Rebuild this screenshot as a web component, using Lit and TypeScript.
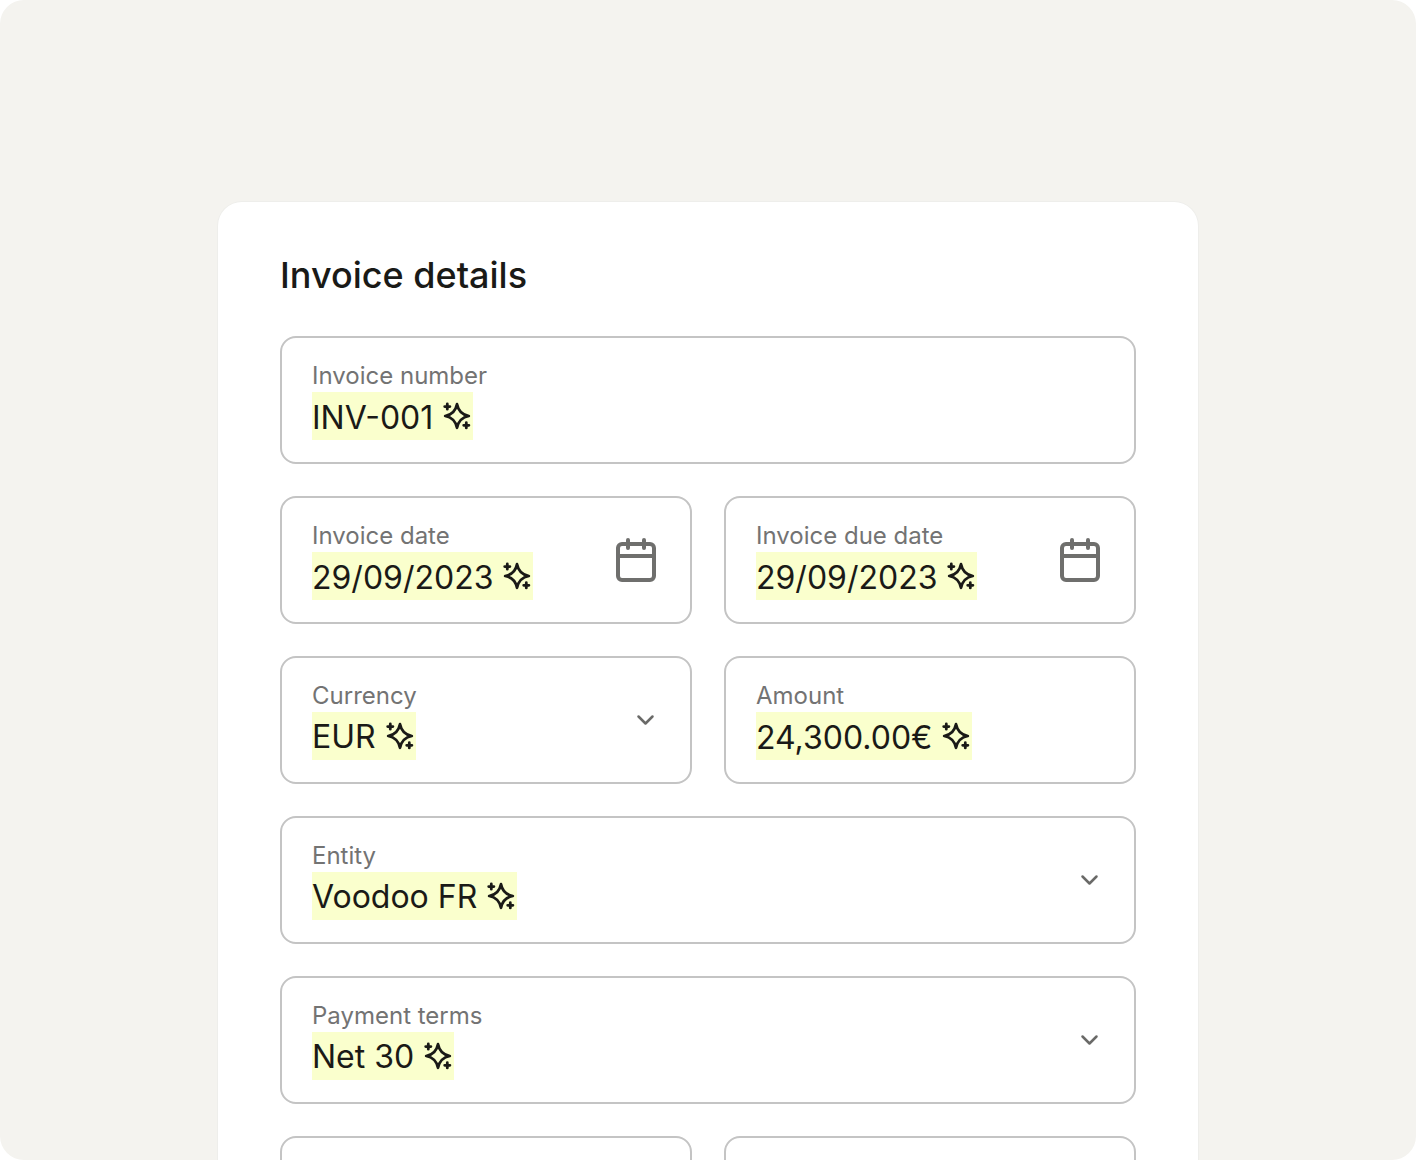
import { LitElement, html, css, svg, nothing } from "lit";
import { customElement, property } from "lit/decorators.js";

const sparkles = html`<svg class="sparkles" viewBox="0 0 32 32" aria-hidden="true">
  ${svg`<path d="M16 4.2Q17.9 14.1 27.8 16Q17.9 17.9 16 27.8Q14.1 17.9 4.2 16Q14.1 14.1 16 4.2Z"/>
  <path d="M6.3 4V9.2M3.7 6.6H8.9M25.3 22.7V27.9M22.7 25.3H27.9"/>`}
</svg>`;

const calendar = html`<svg class="calendar" viewBox="0 0 24 24" aria-hidden="true">
  ${svg`<rect x="3" y="4" width="18" height="18" rx="2"/><path d="M8 2V6M16 2V6M3 10H21"/>`}
</svg>`;

const chevron = html`<svg class="chevron" viewBox="0 0 32 32" aria-hidden="true">
  ${svg`<path d="M10.5 12.5L17.5 19.5L24.5 12.5"/>`}
</svg>`;

@customElement("form-field")
export class FormField extends LitElement {
  @property() label = "";
  @property() value = "";
  @property() kind: "text" | "date" | "select" = "text";

  static styles = css`
    :host {
      display: block;
      min-width: 0;
    }
    .field {
      box-sizing: border-box;
      display: flex;
      align-items: center;
      justify-content: space-between;
      min-height: 128px;
      padding: 22px 30px;
      border: 2px solid #c4c4c4;
      border-radius: 16px;
      background: #fff;
    }
    .content {
      display: flex;
      flex-direction: column;
      align-items: flex-start;
      min-width: 0;
    }
    .label {
      font-size: 24px;
      line-height: 32px;
      color: #737373;
    }
    .suggestion {
      display: flex;
      align-items: center;
      gap: 8px;
      background: #faffcd;
    }
    .control {
      field-sizing: content;
      appearance: none;
      box-sizing: border-box;
      height: 48px;
      margin: 0;
      padding: 2px 0 0;
      border: 0;
      border-radius: 0;
      outline: 0;
      background: transparent;
      color: #1a1a17;
      font: inherit;
      font-size: 32px;
      line-height: 46px;
    }
    .picker {
      display: flex;
      flex: none;
      padding: 0;
      border: 0;
      background: none;
      cursor: pointer;
    }
    svg {
      display: block;
      flex: none;
      fill: none;
      stroke-linecap: round;
      stroke-linejoin: round;
    }
    .sparkles {
      width: 32px;
      height: 32px;
      stroke: #1a1a17;
      stroke-width: 2.8;
    }
    .calendar {
      width: 48px;
      height: 48px;
      stroke: #6f6f6d;
      stroke-width: 2;
    }
    .chevron {
      width: 32px;
      height: 32px;
      stroke: #6a6a68;
      stroke-width: 2.5;
    }
  `;

  render() {
    if (!this.label) return html`<div class="field"></div>`;
    return html`
      <div class="field">
        <div class="content">
          <label class="label" for="control">${this.label}</label>
          <div class="suggestion">
            ${this.kind === "select"
              ? html`<select id="control" class="control"><option>${this.value}</option></select>`
              : html`<input id="control" class="control" type="text" .value=${this.value} />`}
            ${sparkles}
          </div>
        </div>
        ${this.kind === "date"
          ? html`<button class="picker" type="button" aria-label="Choose date">${calendar}</button>`
          : this.kind === "select"
            ? chevron
            : nothing}
      </div>
    `;
  }
}

@customElement("app-root")
export class AppRoot extends LitElement {
  static styles = css`
    :host {
      display: block;
      font-family: Inter, "Liberation Sans", sans-serif;
      color: #1a1a17;
    }
    .page {
      box-sizing: border-box;
      display: flex;
      justify-content: center;
      align-items: flex-start;
      height: 100vh;
      padding: 202px 32px 0;
      border-radius: 24px;
      background: #f4f3ef;
      overflow: hidden;
    }
    .card {
      box-sizing: border-box;
      width: 100%;
      max-width: 980px;
      padding: 53px 62px;
      border-radius: 24px;
      background: #fff;
      box-shadow: 0 0 0 1px #eeeeeb;
    }
    .title {
      margin: 0 0 41px;
      font-size: 36px;
      line-height: 40px;
      font-weight: 500;
    }
    .form {
      display: grid;
      grid-template-columns: repeat(2, minmax(0, 1fr));
      gap: 32px;
    }
    .wide {
      grid-column: 1 / -1;
    }
  `;

  render() {
    return html`
      <main class="page">
        <section class="card">
          <h1 class="title">Invoice details</h1>
          <form class="form">
            <form-field class="wide" label="Invoice number" value="INV-001"></form-field>
            <form-field kind="date" label="Invoice date" value="29/09/2023"></form-field>
            <form-field kind="date" label="Invoice due date" value="29/09/2023"></form-field>
            <form-field kind="select" label="Currency" value="EUR"></form-field>
            <form-field label="Amount" value="24,300.00€"></form-field>
            <form-field class="wide" kind="select" label="Entity" value="Voodoo FR"></form-field>
            <form-field class="wide" kind="select" label="Payment terms" value="Net 30"></form-field>
            <form-field></form-field>
            <form-field></form-field>
          </form>
        </section>
      </main>
    `;
  }
}
